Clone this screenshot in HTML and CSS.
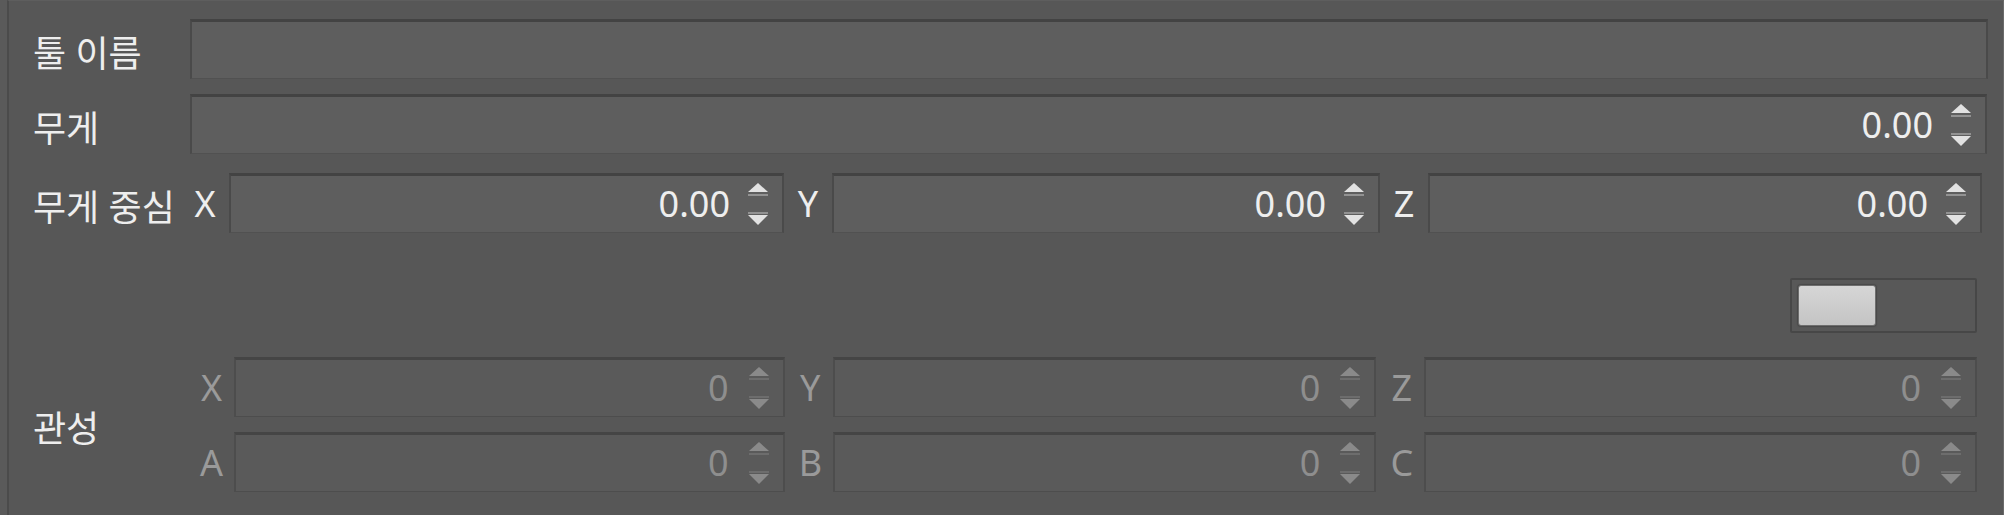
FILE: index.html
```html
<!DOCTYPE html>
<html lang="ko">
<head>
<meta charset="utf-8">
<link rel="stylesheet" href="styles.css">
</head>
<body>
<div class="panel">
  <div class="row r-name">
    <div class="label">툴 이름</div>
    <div class="field"></div>
  </div>
  <div class="row r-weight">
    <div class="label">무게</div>
    <div class="field spin"><span class="val">0.00</span><svg class="arrows" viewBox="0 0 20 42" width="20" height="42"><polygon points="10,0 20,9 0,9"/><rect x="0" y="11" width="20" height="2" opacity="0.4"/><rect x="0" y="29" width="20" height="2" opacity="0.4"/><polygon points="0,32 20,32 10,42"/></svg></div>
  </div>
  <div class="row r-cog">
    <div class="label">무게 중심</div>
    <div class="triple">
      <div class="grp g1"><span class="axis">X</span><div class="field spin"><span class="val">0.00</span><svg class="arrows" viewBox="0 0 20 42" width="20" height="42"><polygon points="10,0 20,9 0,9"/><rect x="0" y="11" width="20" height="2" opacity="0.4"/><rect x="0" y="29" width="20" height="2" opacity="0.4"/><polygon points="0,32 20,32 10,42"/></svg></div></div>
      <div class="grp g2"><span class="axis">Y</span><div class="field spin"><span class="val">0.00</span><svg class="arrows" viewBox="0 0 20 42" width="20" height="42"><polygon points="10,0 20,9 0,9"/><rect x="0" y="11" width="20" height="2" opacity="0.4"/><rect x="0" y="29" width="20" height="2" opacity="0.4"/><polygon points="0,32 20,32 10,42"/></svg></div></div>
      <div class="grp g3"><span class="axis">Z</span><div class="field spin"><span class="val">0.00</span><svg class="arrows" viewBox="0 0 20 42" width="20" height="42"><polygon points="10,0 20,9 0,9"/><rect x="0" y="11" width="20" height="2" opacity="0.4"/><rect x="0" y="29" width="20" height="2" opacity="0.4"/><polygon points="0,32 20,32 10,42"/></svg></div></div>
    </div>
  </div>
  <div class="row r-toggle">
    <div class="toggle"><div class="knob"></div></div>
  </div>
  <div class="row r-inertia">
    <div class="label">관성</div>
    <div class="irows">
      <div class="triple dis">
        <div class="grp g1"><span class="axis">X</span><div class="field spin"><span class="val">0</span><svg class="arrows" viewBox="0 0 20 42" width="20" height="42"><polygon points="10,0 20,9 0,9"/><rect x="0" y="11" width="20" height="2" opacity="0.4"/><rect x="0" y="29" width="20" height="2" opacity="0.4"/><polygon points="0,32 20,32 10,42"/></svg></div></div>
        <div class="grp g2"><span class="axis">Y</span><div class="field spin"><span class="val">0</span><svg class="arrows" viewBox="0 0 20 42" width="20" height="42"><polygon points="10,0 20,9 0,9"/><rect x="0" y="11" width="20" height="2" opacity="0.4"/><rect x="0" y="29" width="20" height="2" opacity="0.4"/><polygon points="0,32 20,32 10,42"/></svg></div></div>
        <div class="grp g3"><span class="axis">Z</span><div class="field spin"><span class="val">0</span><svg class="arrows" viewBox="0 0 20 42" width="20" height="42"><polygon points="10,0 20,9 0,9"/><rect x="0" y="11" width="20" height="2" opacity="0.4"/><rect x="0" y="29" width="20" height="2" opacity="0.4"/><polygon points="0,32 20,32 10,42"/></svg></div></div>
      </div>
      <div class="triple dis">
        <div class="grp g1"><span class="axis">A</span><div class="field spin"><span class="val">0</span><svg class="arrows" viewBox="0 0 20 42" width="20" height="42"><polygon points="10,0 20,9 0,9"/><rect x="0" y="11" width="20" height="2" opacity="0.4"/><rect x="0" y="29" width="20" height="2" opacity="0.4"/><polygon points="0,32 20,32 10,42"/></svg></div></div>
        <div class="grp g2"><span class="axis">B</span><div class="field spin"><span class="val">0</span><svg class="arrows" viewBox="0 0 20 42" width="20" height="42"><polygon points="10,0 20,9 0,9"/><rect x="0" y="11" width="20" height="2" opacity="0.4"/><rect x="0" y="29" width="20" height="2" opacity="0.4"/><polygon points="0,32 20,32 10,42"/></svg></div></div>
        <div class="grp g3"><span class="axis">C</span><div class="field spin"><span class="val">0</span><svg class="arrows" viewBox="0 0 20 42" width="20" height="42"><polygon points="10,0 20,9 0,9"/><rect x="0" y="11" width="20" height="2" opacity="0.4"/><rect x="0" y="29" width="20" height="2" opacity="0.4"/><polygon points="0,32 20,32 10,42"/></svg></div></div>
      </div>
    </div>
  </div>
</div>
</body>
</html>
```

FILE: styles.css
```css
* { box-sizing: border-box; }
html, body {
  margin: 0;
  padding: 0;
  width: 2004px;
  height: 515px;
  overflow: hidden;
  background: #5a5a5a;
}
body {
  font-family: "Noto Sans", "Noto Sans CJK KR", sans-serif;
  font-size: 36px;
  color: #eeeeee;
}
.panel {
  margin-left: 7px;
  height: 515px;
  border-left: 2px solid #4b4b4b;
  border-top: 1px solid #5e5e5e;
  border-right: 1px solid #6a6a6a;
  background: #575757;
  padding: 18px 15px 0 24px;
  display: flex;
  flex-direction: column;
}
.row {
  display: flex;
  align-items: center;
}
.label {
  width: 157px;
  flex: none;
  white-space: nowrap;
  line-height: 1;
  padding-top: 10px;
}
.field {
  flex: 1;
  height: 60px;
  background: #5e5e5e;
  border: 2px solid #4a4a4a;
  border-top: 3px solid #434343;
  border-bottom: 1px solid #515151;
}
.r-weight { margin-top: 15px; }
.r-weight .field { margin-right: 1px; }
.r-cog { margin-top: 19px; padding-right: 6px; }
.spin {
  display: flex;
  align-items: center;
  justify-content: flex-end;
  padding-right: 14px;
}
.val {
  line-height: 1;
  margin-right: 18px;
  color: #eeeeee;
}
.arrows {
  fill: #e2e2e2;
  flex: none;
}
.triple {
  flex: 1;
  display: flex;
  gap: 12px;
  padding-left: 3px;
}
.grp {
  flex: 1 1 0;
  display: flex;
  align-items: center;
}
.g1 { flex-grow: 590; }
.g2 { flex-grow: 583; }
.g3 { flex-grow: 589; }
.axis {
  width: 24px;
  margin-right: 12px;
  flex: none;
  text-align: center;
  line-height: 1;
  padding-top: 2px;
}
.r-toggle {
  margin-top: 45px;
  justify-content: flex-end;
  padding-right: 11px;
}
.toggle {
  width: 187px;
  height: 55px;
  background: #585858;
  border: 2px solid #474747;
  border-radius: 2px;
  padding: 5px 6px;
}
.knob {
  width: 78px;
  height: 41px;
  border: 1px solid #6e6e6e;
  border-radius: 3px;
  background: linear-gradient(#d6d6d6, #c4c4c4);
  box-shadow: 0 0 1px 1px #4a4a4a;
}
.r-inertia {
  margin-top: 24px;
  padding-right: 11px;
}
.r-inertia .label { padding-top: 8px; }
.irows {
  flex: 1;
  display: flex;
  flex-direction: column;
  gap: 15px;
}
.dis { gap: 4px; padding-left: 0; }
.dis .g1 { flex-grow: 595; }
.dis .g2 { flex-grow: 588; }
.dis .g3 { flex-grow: 597; }
.dis .axis {
  color: #9a9a9a;
  width: 23px;
  margin-left: 10px;
  margin-right: 11px;
}
.dis .field {
  background: #5a5a5a;
  border-color: #4d4d4d;
  border-top-color: #454545;
}
.dis .val { color: #8e8e8e; margin-right: 20px; }
.dis .arrows { fill: #8a8a8a; }
```
